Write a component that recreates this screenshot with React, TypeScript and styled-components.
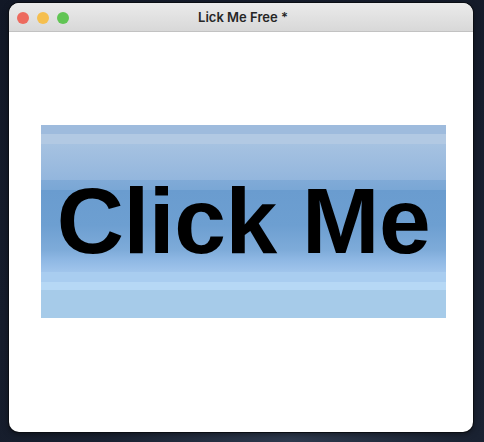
import React from "react";
import styled, { createGlobalStyle } from "styled-components";

const Global = createGlobalStyle`
  html, body { margin: 0; padding: 0; }
  body {
    width: 484px;
    height: 442px;
    overflow: hidden;
    background: radial-gradient(ellipse at 60% 100%, #2e3a4e 0%, #1a2232 45%, #121826 100%);
    font-family: "Liberation Sans", Arial, sans-serif;
  }
`;

const Desktop = styled.div`
  padding: 3px 11px 10px 9px;
  box-sizing: border-box;
  width: 484px;
  height: 442px;
`;

const Window = styled.div`
  width: 464px;
  height: 429px;
  border-radius: 10px;
  overflow: hidden;
  background: #ffffff;
  box-shadow: 0 0 0 1px #0b0e14, 0 2px 6px rgba(0, 0, 0, 0.5);
  display: flex;
  flex-direction: column;
`;

const TitleBar = styled.div`
  height: 28px;
  flex: none;
  position: relative;
  display: flex;
  align-items: center;
  justify-content: center;
  background: linear-gradient(#ebebeb, #d8d8d8);
  border-bottom: 1px solid #c2c2c2;
`;

const Lights = styled.div`
  position: absolute;
  left: 8px;
  top: 9px;
  display: flex;
  gap: 8px;
`;

const Light = styled.span<{ $c: string }>`
  width: 12px;
  height: 12px;
  border-radius: 50%;
  background: ${(p) => p.$c};
`;

const Title = styled.div`
  font-family: "Inter", "Liberation Sans", sans-serif;
  font-size: 13px;
  font-weight: 600;
  color: #262626;
  margin-left: 4px;
`;

const Content = styled.div`
  flex: 1;
  padding: 93px 0 0 32px;
`;

const BigButton = styled.button`
  width: 405px;
  height: 193px;
  border: none;
  padding: 0;
  margin: 0;
  display: flex;
  align-items: center;
  justify-content: center;
  font-family: "Liberation Sans", Arial, sans-serif;
  font-weight: 700;
  font-size: 93px;
  color: #000;
  letter-spacing: -0.5px;
  background: linear-gradient(
    to bottom,
    #9ebbdd 0px,
    #9ebbdd 9px,
    #b2c9e3 9px,
    #b2c9e3 19px,
    #a6c2e1 19px,
    #93b6dd 55px,
    #80aad7 55px,
    #7aa7d5 65px,
    #6a9ccf 65px,
    #6d9fd1 100px,
    #7eabd9 125px,
    #8fb8e4 135px,
    #a1c5ec 147px,
    #a9cdf0 147px,
    #a9cdf0 157px,
    #b6d8f5 157px,
    #b6d8f5 165px,
    #a6cbe9 165px,
    #a6cbe9 193px
  );
`;

export default function App() {
  return (
    <>
      <Global />
      <Desktop>
        <Window>
          <TitleBar>
            <Lights>
              <Light $c="#ed6a5e" />
              <Light $c="#f5bf4f" />
              <Light $c="#61c554" />
            </Lights>
            <Title>Lick Me Free *</Title>
          </TitleBar>
          <Content>
            <BigButton>Click Me</BigButton>
          </Content>
        </Window>
      </Desktop>
    </>
  );
}
